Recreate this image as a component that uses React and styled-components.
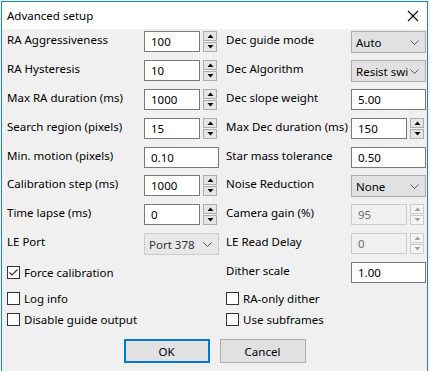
import styled, { createGlobalStyle } from 'styled-components'

const GlobalStyle = createGlobalStyle`
  html, body {
    margin: 0;
    padding: 0;
    background: #f7f7f7;
  }
  body {
    font-family: "Noto Sans", "Open Sans", sans-serif;
    font-size: 11.5px;
    color: #000;
  }
`

const Window = styled.div`
  margin: 1px 0 0 1px;
  width: 427px;
  height: 370px;
  border: 1px solid #1883d7;
  border-bottom: none;
  background: #f0f0f0;
  box-sizing: border-box;
  display: flex;
  flex-direction: column;
`

const TitleBar = styled.div`
  height: 27px;
  background: #fff;
  display: flex;
  align-items: center;
  justify-content: space-between;
  padding: 0 8px 0 5px;
  flex-shrink: 0;
`

const Title = styled.span`
  font-size: 11.5px;
  margin-top: -1px;
`

const CloseIcon = () => (
  <svg width="12" height="12" viewBox="0 0 12 12">
    <path d="M1 1 L11 11 M11 1 L1 11" stroke="#000" strokeWidth="1.1" />
  </svg>
)

const Body = styled.div`
  padding: 2px 0 0 5px;
  display: flex;
  flex-direction: column;
`

const FormGrid = styled.div`
  display: grid;
  grid-template-columns: 137px 82px 125px 75px;
  grid-auto-rows: 28.875px;
`

const Label = styled.div`
  padding-top: 1px;
  line-height: 16px;
  white-space: nowrap;
`

const Control = styled.div`
  display: flex;
  align-items: flex-start;
  gap: 2px;
`

const TextBox = styled.div`
  box-sizing: border-box;
  width: ${p => p.$width}px;
  height: 21px;
  border: 1px solid ${p => (p.$disabled ? '#cccccc' : '#7a7a7a')};
  background: ${p => (p.$disabled ? '#f0f0f0' : '#fff')};
  color: ${p => (p.$disabled ? '#6d6d6d' : '#000')};
  padding: 2px 0 0 6px;
  line-height: 16px;
`

const Spinner = styled.div`
  display: flex;
  flex-direction: column;
  gap: 1px;
  width: 14px;
  margin-left: 1px;
`

const SpinButton = styled.div`
  box-sizing: border-box;
  height: 10px;
  border: 1px solid ${p => (p.$disabled ? '#cccccc' : '#adadad')};
  background: ${p => (p.$disabled ? '#f4f4f4' : '#e5e5e5')};
  display: flex;
  align-items: center;
  justify-content: center;
`

const Arrow = ({ up, disabled }) => (
  <svg width="7" height="4" viewBox="0 0 7 4">
    <path
      d={up ? 'M0.5 4 L3.5 0.5 L6.5 4 Z' : 'M0.5 0 L3.5 3.5 L6.5 0 Z'}
      fill={disabled ? '#a0a0a0' : '#000'}
    />
  </svg>
)

const SelectBox = styled.div`
  box-sizing: border-box;
  width: 75px;
  height: 22px;
  border: 1px solid ${p => (p.$disabled ? '#cccccc' : '#adadad')};
  background: ${p => (p.$disabled ? '#e8e8e8' : '#e1e1e1')};
  color: ${p => (p.$disabled ? '#333' : '#000')};
  display: flex;
  align-items: center;
  justify-content: space-between;
  padding: 1px 6px 0 4px;
  white-space: nowrap;
  overflow: hidden;
`

const Chevron = () => (
  <svg width="9" height="5" viewBox="0 0 9 5">
    <path d="M0.5 0.5 L4.5 4.5 L8.5 0.5" stroke="#555" fill="none" strokeWidth="1" />
  </svg>
)

function NumberField({ value, width = 56, disabled }) {
  return (
    <Control>
      <TextBox $width={width} $disabled={disabled}>{value}</TextBox>
      <Spinner>
        <SpinButton $disabled={disabled}><Arrow up disabled={disabled} /></SpinButton>
        <SpinButton $disabled={disabled}><Arrow disabled={disabled} /></SpinButton>
      </Spinner>
    </Control>
  )
}

function TextField({ value, width = 75 }) {
  return (
    <Control>
      <TextBox $width={width}>{value}</TextBox>
    </Control>
  )
}

function Select({ value, disabled }) {
  return (
    <Control>
      <SelectBox $disabled={disabled}>
        <span>{value}</span>
        <Chevron />
      </SelectBox>
    </Control>
  )
}

const CheckRow = styled.label`
  display: flex;
  align-items: center;
  gap: 4px;
  height: 21px;
  white-space: nowrap;
`

const Box = styled.span`
  box-sizing: border-box;
  width: 13px;
  height: 13px;
  border: 1px solid #333;
  background: #fff;
  display: flex;
  align-items: center;
  justify-content: center;
  flex-shrink: 0;
`

function CheckBox({ label, checked }) {
  return (
    <CheckRow>
      <Box>
        {checked && (
          <svg width="11" height="11" viewBox="0 0 11 11">
            <path d="M1.5 5.5 L4 8 L9.5 2.5" stroke="#333" fill="none" strokeWidth="1.2" />
          </svg>
        )}
      </Box>
      <span>{label}</span>
    </CheckRow>
  )
}

const LastRow = styled.div`
  display: grid;
  grid-template-columns: 219px 125px 75px;
  height: 26px;
`

const CheckGrid = styled.div`
  display: grid;
  grid-template-columns: 219px 200px;
  grid-auto-rows: 21px;
`

const Buttons = styled.div`
  display: flex;
  justify-content: center;
  gap: 10px;
  margin-top: 9px;
  padding-right: 5px;
`

const Button = styled.button`
  box-sizing: border-box;
  width: 86px;
  height: 24px;
  font: inherit;
  color: #000;
  background: #e1e1e1;
  border: ${p => (p.$primary ? '2px solid #0078d7' : '1px solid #adadad')};
  padding: 0;
`

export default function App() {
  return (
    <>
      <GlobalStyle />
      <Window>
        <TitleBar>
          <Title>Advanced setup</Title>
          <CloseIcon />
        </TitleBar>
        <Body>
          <FormGrid>
            <Label>RA Aggressiveness</Label>
            <NumberField value="100" />
            <Label>Dec guide mode</Label>
            <Select value="Auto" />

            <Label>RA Hysteresis</Label>
            <NumberField value="10" />
            <Label>Dec Algorithm</Label>
            <Select value="Resist swi" />

            <Label>Max RA duration (ms)</Label>
            <NumberField value="1000" />
            <Label>Dec slope weight</Label>
            <TextField value="5.00" />

            <Label>Search region (pixels)</Label>
            <NumberField value="15" />
            <Label>Max Dec duration (ms)</Label>
            <NumberField value="150" />

            <Label>Min. motion (pixels)</Label>
            <TextField value="0.10" />
            <Label>Star mass tolerance</Label>
            <TextField value="0.50" />

            <Label>Calibration step (ms)</Label>
            <NumberField value="1000" />
            <Label>Noise Reduction</Label>
            <Select value="None" />

            <Label>Time lapse (ms)</Label>
            <NumberField value="0" />
            <Label>Camera gain (%)</Label>
            <NumberField value="95" disabled />

            <Label>LE Port</Label>
            <Select value="Port 378" disabled />
            <Label>LE Read Delay</Label>
            <NumberField value="0" disabled />
          </FormGrid>
          <LastRow>
            <CheckBox label="Force calibration" checked />
            <Label>Dither scale</Label>
            <TextField value="1.00" />
          </LastRow>
          <CheckGrid>
            <CheckBox label="Log info" />
            <CheckBox label="RA-only dither" />
            <CheckBox label="Disable guide output" />
            <CheckBox label="Use subframes" />
          </CheckGrid>
          <Buttons>
            <Button $primary>OK</Button>
            <Button>Cancel</Button>
          </Buttons>
        </Body>
      </Window>
    </>
  )
}
